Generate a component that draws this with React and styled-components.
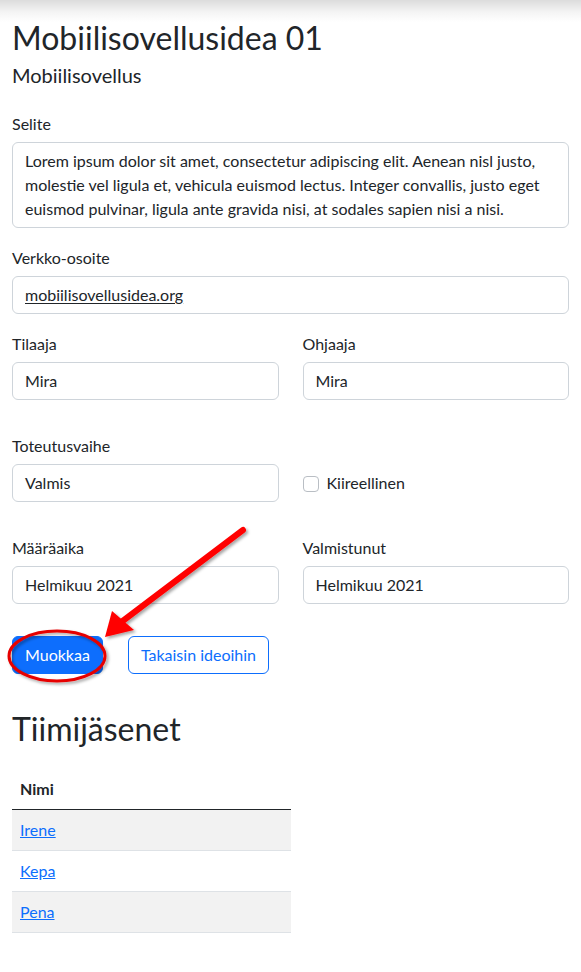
import React from 'react'
import styled, { createGlobalStyle } from 'styled-components'

const GlobalStyle = createGlobalStyle`
  * { box-sizing: border-box; }
  body {
    margin: 0;
    background: #fff;
    color: #212529;
    font-family: "Lato", "Noto Sans", sans-serif;
    font-size: 16px;
    line-height: 1.5;
  }
`

const Page = styled.div`
  position: relative;
  min-height: 972px;
  padding: 19px 12px 40px;
  background: linear-gradient(#dcdcdc 0px, #f4f4f4 12px, #fff 22px) no-repeat;
  background-size: 100% 22px;
`

const Title = styled.h1`
  margin: 0;
  font-size: 32px;
  font-weight: 400;
  line-height: 37px;
`

const Subtitle = styled.h5`
  margin: 7px 0 0;
  font-size: 20px;
  font-weight: 400;
  line-height: 24px;
`

const Field = styled.div`
  margin-top: ${p => p.$top}px;
`

const Row = styled.div`
  display: grid;
  grid-template-columns: 1fr 1fr;
  column-gap: 24px;
  align-items: end;
  margin-top: ${p => p.$top}px;
`

const Label = styled.label`
  display: block;
  margin-bottom: 6px;
  line-height: 24px;
`

const Control = styled.div`
  width: 100%;
  min-height: 38px;
  padding: 6px 12px;
  border: 1px solid #ced4da;
  border-radius: 6px;
  line-height: 24px;
  background: #fff;
`

const UrlText = styled.span`
  text-decoration: underline;
  text-underline-offset: 2px;
`

const CheckWrap = styled.label`
  display: flex;
  align-items: center;
  gap: 8px;
  height: 38px;
`

const CheckBox = styled.span`
  width: 16px;
  height: 16px;
  border: 1px solid #b9bec4;
  border-radius: 4px;
  margin-top: 1px;
`

const Buttons = styled.div`
  display: flex;
  gap: 25px;
  margin-top: 32px;
`

const Button = styled.button`
  font: inherit;
  line-height: 24px;
  padding: 6px 12px;
  border-radius: 6px;
  border: 1px solid #0d6efd;
  background: ${p => (p.$outline ? '#fff' : '#0d6efd')};
  color: ${p => (p.$outline ? '#0d6efd' : '#fff')};
  cursor: pointer;
`

const SectionTitle = styled.h2`
  margin: 36px 0 0;
  font-size: 32px;
  font-weight: 400;
  line-height: 37px;
`

const Table = styled.table`
  margin-top: 22px;
  width: 279px;
  border-collapse: collapse;
`

const Th = styled.th`
  text-align: left;
  padding: 8px;
  font-weight: 700;
  line-height: 24px;
  border-bottom: 1.5px solid #212529;
`

const Td = styled.td`
  padding: 8px;
  line-height: 24px;
  border-bottom: 1px solid #dee2e6;
  background: ${p => (p.$striped ? '#f2f2f2' : '#fff')};
`

const NameLink = styled.a`
  color: #0d6efd;
  text-decoration: underline;
`

const Annotation = styled.svg`
  position: absolute;
  left: 0;
  top: 0;
  pointer-events: none;
`

const members = ['Irene', 'Kepa', 'Pena']

export default function App() {
  return (
    <Page>
      <GlobalStyle />
      <Title>Mobiilisovellusidea 01</Title>
      <Subtitle>Mobiilisovellus</Subtitle>

      <Field $top={25}>
        <Label>Selite</Label>
        <Control>
          Lorem ipsum dolor sit amet, consectetur adipiscing elit. Aenean nisl justo, molestie vel ligula et,
          vehicula euismod lectus. Integer convallis, justo eget euismod pulvinar, ligula ante gravida nisi, at
          sodales sapien nisi a nisi.
        </Control>
      </Field>

      <Field $top={18}>
        <Label>Verkko-osoite</Label>
        <Control>
          <UrlText>mobiilisovellusidea.org</UrlText>
        </Control>
      </Field>

      <Row $top={18}>
        <div>
          <Label>Tilaaja</Label>
          <Control>Mira</Control>
        </div>
        <div>
          <Label>Ohjaaja</Label>
          <Control>Mira</Control>
        </div>
      </Row>

      <Row $top={34}>
        <div>
          <Label>Toteutusvaihe</Label>
          <Control>Valmis</Control>
        </div>
        <CheckWrap>
          <CheckBox />
          Kiireellinen
        </CheckWrap>
      </Row>

      <Row $top={34}>
        <div>
          <Label>Määräaika</Label>
          <Control>Helmikuu 2021</Control>
        </div>
        <div>
          <Label>Valmistunut</Label>
          <Control>Helmikuu 2021</Control>
        </div>
      </Row>

      <Buttons>
        <Button>Muokkaa</Button>
        <Button $outline>Takaisin ideoihin</Button>
      </Buttons>

      <SectionTitle>Tiimijäsenet</SectionTitle>
      <Table>
        <thead>
          <tr>
            <Th>Nimi</Th>
          </tr>
        </thead>
        <tbody>
          {members.map((m, i) => (
            <tr key={m}>
              <Td $striped={i % 2 === 0}>
                <NameLink href="#">{m}</NameLink>
              </Td>
            </tr>
          ))}
        </tbody>
      </Table>

      <Annotation width="581" height="972" viewBox="0 0 581 972">
        <defs>
          <filter id="shadow" x="-20%" y="-20%" width="140%" height="140%">
            <feDropShadow dx="2" dy="2" stdDeviation="1.5" floodColor="#000" floodOpacity="0.35" />
          </filter>
        </defs>
        <g filter="url(#shadow)">
          <line x1="243" y1="530" x2="120" y2="623" stroke="#ff0000" strokeWidth="6" strokeLinecap="round" />
          <polygon points="105,637 112,611 134,630" fill="#ff0000" />
          <ellipse cx="57" cy="656" rx="48" ry="25" fill="none" stroke="#e60000" strokeWidth="3" />
        </g>
      </Annotation>
    </Page>
  )
}
